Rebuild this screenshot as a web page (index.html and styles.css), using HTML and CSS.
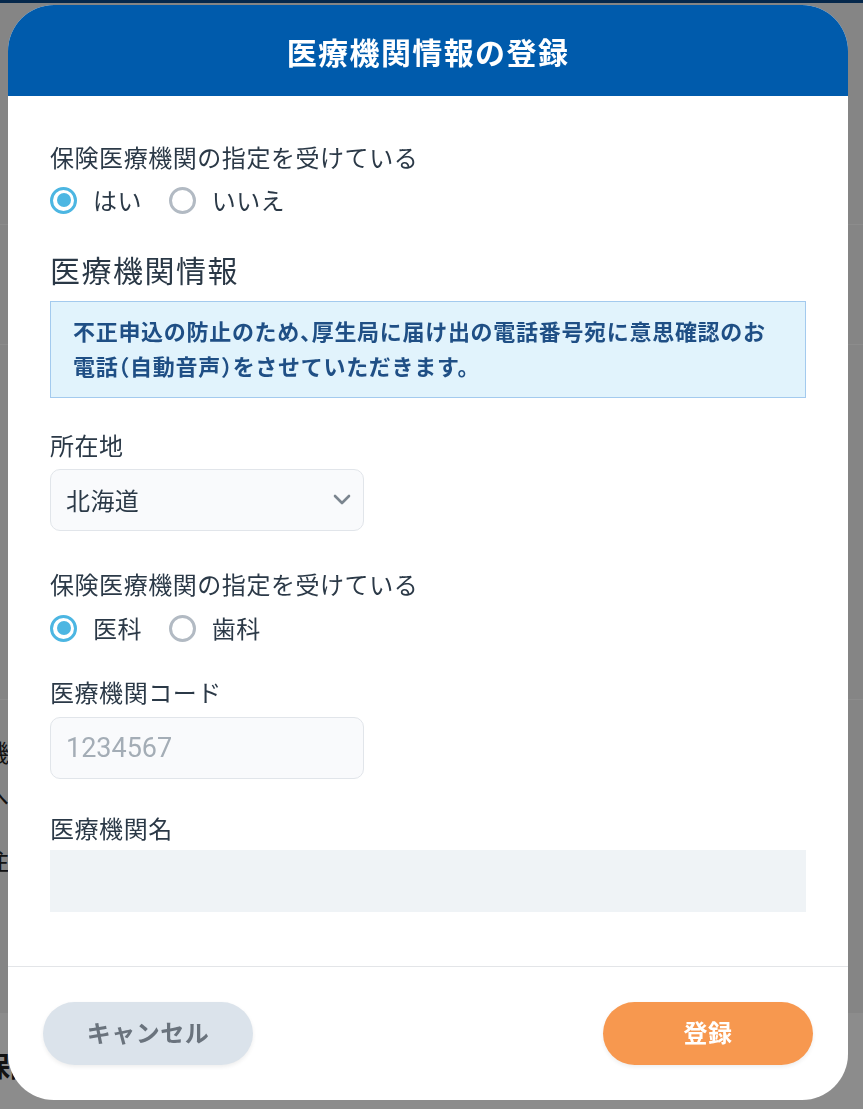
FILE: index.html
```html
<!DOCTYPE html>
<html lang="ja">
<head>
<meta charset="utf-8">
<title>医療機関情報の登録</title>
<link rel="stylesheet" href="styles.css">
</head>
<body>
<div class="page">
  <div class="page-topbar"></div>
  <div class="page-row page-row-a"></div>
  <div class="page-row page-row-b"></div>
  <div class="page-row page-row-c"></div>
  <div class="page-row page-row-d">
    <p class="bg-text bg-t1">機関</p>
    <p class="bg-text bg-t2">へ</p>
    <p class="bg-text bg-t3">注意</p>
  </div>
  <div class="page-foot">
    <p class="bg-text bg-bold">保険</p>
  </div>
</div>

<div class="overlay">
  <div class="modal">
    <header class="modal-header">
      <h1 class="modal-title">医療機関情報の登録</h1>
    </header>

    <div class="modal-body">
      <p class="label label-first">保険医療機関の指定を受けている</p>
      <div class="radios radios-a">
        <label class="radio"><span class="radio-mark is-checked"></span><span class="radio-text">はい</span></label>
        <label class="radio"><span class="radio-mark"></span><span class="radio-text">いいえ</span></label>
      </div>

      <h2 class="section-title">医療機関情報</h2>

      <div class="notice">不正申込の防止のため<span class="half">、</span>厚生局に届け出の電話番号宛に意思確認のお電話<span class="half">（</span>自動音声<span class="half">）</span>をさせていただきます。</div>

      <p class="label label-loc">所在地</p>
      <div class="select">
        <span class="select-value">北海道</span>
        <svg class="chevron" width="18" height="11" viewBox="0 0 18 11"><path d="M2 2 L9 9 L16 2" fill="none" stroke="#7b858f" stroke-width="2.6" stroke-linecap="round" stroke-linejoin="round"/></svg>
      </div>

      <p class="label label-kind">保険医療機関の指定を受けている</p>
      <div class="radios radios-b">
        <label class="radio"><span class="radio-mark is-checked"></span><span class="radio-text">医科</span></label>
        <label class="radio"><span class="radio-mark"></span><span class="radio-text">歯科</span></label>
      </div>

      <p class="label label-code">医療機関コード</p>
      <input class="text-input" type="text" placeholder="1234567">

      <p class="label label-name">医療機関名</p>
      <div class="readonly-box"></div>
    </div>

    <footer class="modal-footer">
      <button class="btn btn-cancel" type="button">キャンセル</button>
      <button class="btn btn-submit" type="button">登録</button>
    </footer>
  </div>
</div>
</body>
</html>
```

FILE: styles.css
```css
* {
  box-sizing: border-box;
}

html, body {
  margin: 0;
  padding: 0;
}

body {
  font-family: "Noto Sans CJK JP", "Noto Sans", sans-serif;
  background: #ffffff;
  overflow: hidden;
}

/* background page (under the overlay) */
.page {
  width: 863px;
  height: 1109px;
  display: flex;
  flex-direction: column;
}

.page-topbar {
  height: 3px;
  background: #0a4a8a;
}

.page-row {
  background: #f3f3f3;
  border-bottom: 1px solid #ffffff;
}

.page-row-a { height: 222px; }
.page-row-b { height: 120px; }
.page-row-c { height: 355px; }
.page-row-d {
  height: 313px;
  border-bottom: none;
  padding-top: 34px;
}

.bg-text {
  margin: 0 0 0 -15px;
  font-size: 24px;
  line-height: 36px;
  color: #222;
}

.bg-t2 { margin-top: 7px; }
.bg-t3 { margin-top: 29px; }

.page-foot {
  flex: 1;
  background: #ffffff;
  padding-top: 34px;
}

.bg-bold {
  font-weight: 700;
  font-size: 28px;
  margin-left: -18px;
}

/* overlay + modal */
.overlay {
  position: fixed;
  inset: 0;
  background: rgba(0, 0, 0, 0.45);
  display: flex;
  align-items: flex-start;
  padding: 5px 15px 0 8px;
}

.modal {
  width: 840px;
  background: #ffffff;
  border-radius: 46px;
  overflow: hidden;
  display: flex;
  flex-direction: column;
}

.modal-header {
  height: 91px;
  background: #005bac;
  display: flex;
  align-items: center;
  justify-content: center;
}

.modal-title {
  margin: 0;
  color: #ffffff;
  font-size: 30px;
  font-weight: 700;
  letter-spacing: 1.4px;
  line-height: 1;
  padding-left: 0;
}

.modal-body {
  padding: 43px 42px 54px 42px;
  display: flex;
  flex-direction: column;
  align-items: flex-start;
}

.label {
  margin: 0;
  font-size: 24px;
  line-height: 36px;
  color: #2b3947;
  letter-spacing: 0.55px;
}

.label-loc { margin-top: 29px; }
.label-kind { margin-top: 35px; }
.label-code { margin-top: 28px; }
.label-name { margin-top: 31px; }

.radios {
  display: flex;
  align-items: center;
  gap: 27px;
  height: 36px;
}

.radios-a { margin-top: 7px; }
.radios-b { margin-top: 8px; }

.radio {
  display: flex;
  align-items: center;
  gap: 16px;
}

.radio-mark {
  width: 27px;
  height: 27px;
  border-radius: 50%;
  border: 3px solid #b2bac3;
  background: #ffffff;
  display: flex;
  align-items: center;
  justify-content: center;
}

.radio-mark.is-checked {
  border-color: #4cb6e2;
}

.radio-mark.is-checked::after {
  content: "";
  width: 14px;
  height: 14px;
  border-radius: 50%;
  background: #4cb6e2;
}

.radio-text {
  font-size: 24px;
  line-height: 36px;
  color: #2b3947;
  letter-spacing: 0.4px;
}

.section-title {
  margin: 29px 0 0 0;
  font-size: 30px;
  line-height: 45px;
  font-weight: 400;
  color: #2a3846;
  letter-spacing: 1.5px;
}

.notice {
  margin-top: 9px;
  width: 756px;
  background: #e1f3fc;
  border: 1px solid #a3caee;
  padding: 11px 22px 14px 22px;
  font-size: 22px;
  line-height: 35px;
  font-weight: 700;
  color: #1f4f85;
  letter-spacing: 0.7px;
}

.half {
  font-feature-settings: "halt";
}

.select {
  margin-top: 6px;
  width: 314px;
  height: 62px;
  border: 1px solid #e1e5ea;
  border-radius: 10px;
  background: #f9fafc;
  display: flex;
  align-items: center;
  justify-content: space-between;
  padding: 0 12px 2px 15px;
}

.select-value {
  font-size: 24px;
  color: #2b3947;
  letter-spacing: 0.4px;
}

.chevron {
  display: block;
}

.text-input {
  margin-top: 7px;
  width: 314px;
  height: 62px;
  border: 1px solid #e1e5ea;
  border-radius: 10px;
  background: #f9fafc;
  padding: 0 15px;
  font-family: Roboto, "Noto Sans", sans-serif;
  font-size: 27px;
  color: #2b3947;
  outline: none;
}

.text-input::placeholder {
  color: #a4adb6;
}

.readonly-box {
  margin-top: 4px;
  width: 756px;
  height: 62px;
  background: #eff3f6;
}

.modal-footer {
  border-top: 1px solid #e3e5e8;
  padding: 35px 35px 35px 35px;
  display: flex;
  justify-content: space-between;
  align-items: center;
}

.btn {
  width: 210px;
  height: 63px;
  border: none;
  border-radius: 32px;
  font-family: "Noto Sans CJK JP", "Noto Sans", sans-serif;
  font-size: 24px;
  font-weight: 700;
  letter-spacing: 0.5px;
  line-height: 1;
  padding: 0 0 3px 0;
  box-shadow: 0 2px 4px rgba(0, 0, 0, 0.07);
  cursor: pointer;
}

.btn-cancel {
  background: #dbe3eb;
  color: #6a737d;
}

.btn-submit {
  background: #f7984f;
  color: #ffffff;
}
```
